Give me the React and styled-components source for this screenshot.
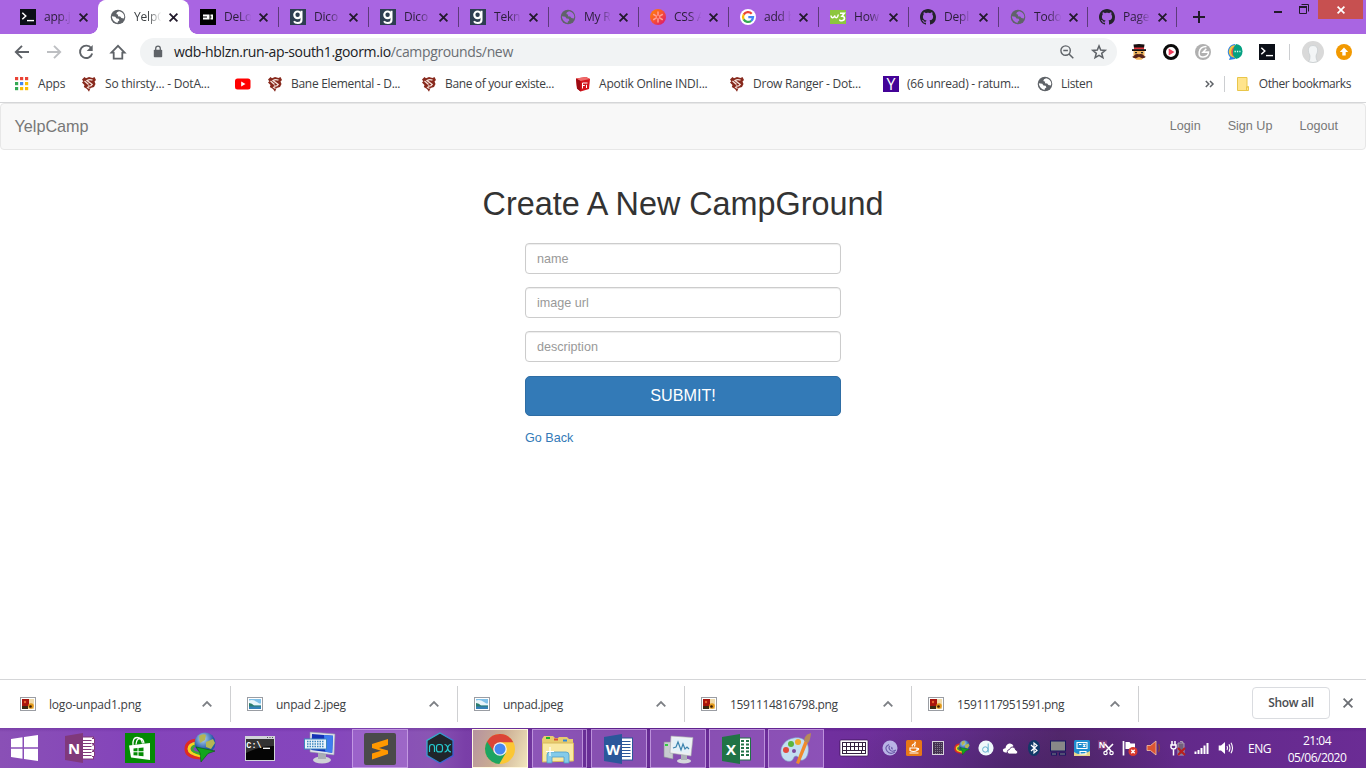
import React from 'react';
import styled, { createGlobalStyle, css } from 'styled-components';

const ui = `'Open Sans', 'Noto Sans', sans-serif`;
const web = `'Liberation Sans', Arial, sans-serif`;

const GlobalStyle = createGlobalStyle`
  *, *::before, *::after { box-sizing: border-box; }
  body { margin: 0; background: #fff; overflow: hidden; }
  svg { display: block; flex: none; overflow: visible; }
`;

const Screen = styled.div`
  width: 1366px;
  height: 768px;
  display: flex;
  flex-direction: column;
  background: #fff;
  font-family: ${ui};
`;

/* ---------- tab strip ---------- */
const TabStrip = styled.div`
  display: flex;
  height: 34px;
  padding-left: 8px;
  background: #a965e2;
  flex: none;
`;
const Tab = styled.div`
  position: relative;
  display: flex;
  align-items: center;
  width: ${(p) => p.$w}px;
  height: 34px;
  padding-left: 12px;
  color: #2b1d39;
  ${(p) => p.$line && css`
    &::after { content: ''; position: absolute; right: -1px; top: 7px; width: 1px; height: 20px; background: #5d3b7b; }
  `}
  ${(p) => p.$active && css`
    background: #fff;
    color: #3c4043;
    border-radius: 8px 8px 0 0;
    box-shadow: 1px 0 0 #fff;
    &::before, &::after { content: ''; position: absolute; bottom: 0; width: 8px; height: 8px; }
    &::before { left: -8px; background: radial-gradient(circle at 0 0, transparent 7.5px, #fff 8px); }
    &::after { right: -9px; background: radial-gradient(circle at 100% 0, transparent 7.5px, #fff 8px); }
  `}
`;
const TabTitle = styled.span`
  width: 28px;
  margin: 0 6.5px 0 8px;
  white-space: nowrap;
  font-size: 12px;
  line-height: 18px;
  letter-spacing: -0.2px;
  mask-image: linear-gradient(90deg, #000 50%, transparent 98%);
`;
const NewTab = styled.div`
  display: flex;
  align-items: center;
  padding-left: 17px;
`;
const WindowControls = styled.div`
  display: flex;
  margin-left: auto;
  margin-right: 3px;
`;
const WindowClose = styled.div`
  width: 45px;
  height: 19px;
  background: #c75050;
  display: flex;
  align-items: center;
  justify-content: center;
`;

/* ---------- toolbar ---------- */
const Toolbar = styled.div`
  display: flex;
  align-items: center;
  height: 36px;
  padding-left: 14px;
  flex: none;
`;
const NavButtons = styled.div`
  display: flex;
  gap: 16px;
  margin-right: 14px;
`;
const Omnibox = styled.div`
  display: flex;
  align-items: center;
  width: 977px;
  height: 28px;
  padding: 0 10px;
  border-radius: 14px;
  background: #f1f3f4;
`;
const Url = styled.div`
  margin-left: 8px;
  flex: 1;
  color: #202124;
  font-size: 14px;
  line-height: 20px;
  letter-spacing: -0.35px;
  white-space: nowrap;
  span { color: #6a6e73; }
`;
const OmniActions = styled.div`
  display: flex;
  gap: 16px;
`;
const Extensions = styled.div`
  display: flex;
  align-items: center;
  gap: 16px;
  margin-left: 14px;
`;
const Divider = styled.i`
  width: 1px;
  height: 16px;
  background: #ccced1;
`;
const Profile = styled.div`
  display: flex;
  align-items: center;
  gap: 12px;
  margin-left: 14px;
`;

/* ---------- bookmarks ---------- */
const Bookmarks = styled.div`
  display: flex;
  align-items: center;
  height: 33px;
  padding: 0 15px 5px 14px;
  border-bottom: 1px solid #d5d6d8;
  flex: none;
`;
const Bookmark = styled.div`
  display: flex;
  align-items: center;
  gap: 8px;
  width: ${(p) => p.$w}px;
`;
const BookmarkText = styled.span`
  font-size: 12px;
  line-height: 18px;
  color: #3c4043;
  white-space: nowrap;
  letter-spacing: ${(p) => p.$ls ?? -0.2}px;
`;
const BookmarkEnd = styled.div`
  display: flex;
  align-items: center;
  gap: 10px;
  margin-left: auto;
`;
const FolderSlot = styled.div`
  display: flex;
  gap: 10px;
  align-items: center;
  margin-left: 2px;
`;

/* ---------- page ---------- */
const Page = styled.main`
  flex: 1;
  display: flex;
  flex-direction: column;
  font-family: ${web};
`;
const Navbar = styled.nav`
  display: flex;
  align-items: center;
  height: 47px;
  padding: 0 27px 0 13.5px;
  border: 1px solid #e7e7e7;
  border-radius: 4px;
  background: #f8f8f8;
  color: #777;
`;
const Brand = styled.a`
  font-size: 16.2px;
`;
const NavLinks = styled.div`
  display: flex;
  gap: 27px;
  margin-left: auto;
  padding-bottom: 2px;
  font-size: 12.6px;
`;
const Heading = styled.h1`
  margin: 35px 0 0;
  text-align: center;
  font-size: 32.4px;
  line-height: 38px;
  letter-spacing: -0.03px;
  font-weight: 400;
  color: #333;
`;
const Form = styled.form`
  display: flex;
  flex-direction: column;
  width: 316px;
  margin: 20px auto 0 525px;
`;
const Field = styled.input`
  height: 31px;
  margin-bottom: 13px;
  padding: 0 11px;
  border: 1px solid #ccc;
  border-radius: 4px;
  background: #fff;
  box-shadow: inset 0 1px 1px rgba(0, 0, 0, 0.075);
  font: 12.6px ${web};
  outline: 0;
  &::placeholder { color: #999; opacity: 1; }
`;
const Submit = styled.button`
  height: 40px;
  margin-top: 1px;
  padding: 0 0 2px;
  border: 1px solid #2e6da4;
  border-radius: 5px;
  background: #337ab7;
  color: #fff;
  font: 16.2px ${web};
`;
const GoBack = styled.a`
  margin-top: 13px;
  font-size: 12.6px;
  line-height: 18px;
  color: #337ab7;
`;

/* ---------- download shelf ---------- */
const Shelf = styled.div`
  display: flex;
  height: 49px;
  padding: 6px 13px 6px 4px;
  border-top: 1px solid #d5d6d8;
  flex: none;
`;
const Download = styled.div`
  display: flex;
  align-items: center;
  width: 227px;
  height: 36px;
  padding: 0 18px 0 16px;
  border-right: 1px solid #cfd0d2;
  color: #3c4043;
  font-size: 12px;
  letter-spacing: ${(p) => p.$ls}px;
  span { margin-left: 13px; flex: 1; white-space: nowrap; }
`;
const ShelfEnd = styled.div`
  display: flex;
  align-items: center;
  gap: 13px;
  margin-left: auto;
  height: 34px;
`;
const ShowAll = styled.div`
  width: 78px;
  height: 32px;
  border: 1px solid #dadce0;
  border-radius: 4px;
  text-align: center;
  font-size: 12px;
  line-height: 30px;
  font-weight: 600;
  letter-spacing: -0.3px;
  color: #4a4d51;
`;

/* ---------- taskbar ---------- */
const Taskbar = styled.div`
  display: flex;
  align-items: center;
  height: 40px;
  flex: none;
  background:
    radial-gradient(ellipse 170px 60px at 1010px 40px, rgba(60, 30, 90, 0.5), transparent),
    linear-gradient(180deg, rgba(60, 0, 110, 0.2), transparent 4px),
    linear-gradient(90deg, #8a50b6 0, #8444ba 130px, #8546bd 330px, #8a55b4 430px, #7a3fa8 465px, #642991 620px, #702f9e 830px, #683092 960px, #56296f 1060px, #62298a 1180px, #6b2c95 1366px);
`;
const Pinned = styled.div`
  display: flex;
  align-items: center;
  justify-content: center;
  width: 60px;
  height: 40px;
  &:first-child { width: 50px; }
`;
const Running = styled.div`
  position: relative;
  display: flex;
  align-items: center;
  justify-content: center;
  width: ${(p) => p.$w || 56}px;
  height: 39px;
  margin: 1px ${(p) => p.$mr ?? 3}px 0 ${(p) => p.$ml || 0}px;
  border: 1px solid rgba(215, 180, 240, 0.65);
  background: rgba(190, 140, 225, 0.38);
  ${(p) => p.$focus && css`
    border: 1px solid #fff8df;
    background: linear-gradient(110deg, #b592a0 0%, #c9ab92 45%, #f1e6bd 100%);
  `}
  ${(p) => p.$stack && css`
    &::after { content: ''; position: absolute; right: -5px; top: -1px; width: 4px; height: 39px; border: 1px solid rgba(215, 180, 240, 0.65); border-left: 0; }
  `}
`;
const Nox = styled.div`
  display: flex;
  justify-content: center;
  width: 64px;
`;
const Tray = styled.div`
  display: flex;
  align-items: center;
  margin-left: 12px;
  padding: 0;
`;
const TrayIcons = styled.div`
  display: flex;
  margin-left: 9px;
`;
const TrayItem = styled.div`
  display: flex;
  justify-content: center;
  align-items: center;
  width: 24px;
`;
const Lang = styled.div`
  margin-left: 10px;
  width: 24px;
  font-size: 12px;
  letter-spacing: -0.5px;
  color: #fff;
`;
const Clock = styled.div`
  margin-left: 14px;
  padding-top: 2px;
  width: 62px;
  text-align: center;
  color: #fff;
  font-size: 12px;
  line-height: 17px;
  letter-spacing: -0.5px;
  white-space: nowrap;
`;

/* ---------- icons ---------- */
const Svg = ({ s = 16, h, children, vb }) => (
  <svg width={s} height={h || s} viewBox={vb || `0 0 ${s} ${h || s}`}>{children}</svg>
);
const Letter = ({ x, y, size, fill = '#fff', weight = 700, font = "'Open Sans', sans-serif", children }) => (
  <text x={x} y={y} fontSize={size} fill={fill} fontWeight={weight} fontFamily={font} textAnchor="middle">{children}</text>
);

const Terminal = () => (
  <Svg>
    <rect width="16" height="16" fill="#0b0f17" />
    <path d="M2.3 3.7 5.8 7 2.3 10.3" fill="none" stroke="#fff" strokeWidth="1.5" />
    <path d="M7 11.6h7" stroke="#fff" strokeWidth="1.4" />
  </Svg>
);
const Globe = ({ c = '#5f6368', bg = '#fff' }) => (
  <Svg>
    <circle cx="8" cy="8" r="7.3" fill={c} />
    <path d="M9.2 2.200 7 3.300 6.300 5l1.900.7-.3 1.600 2.300.3 1.200 1.500 2.400.3.500-1.600C14.200 4.900 12.300 2.700 9.200 2.200z" fill={bg} />
    <path d="M1.900 7.300c.1 3.300 2.300 5.900 5.600 6.600l.4-1.500 1.500-.9-.7-1.700-2.200-.4-1.200-1.700z" fill={bg} />
  </Svg>
);
const Device = () => (
  <Svg>
    <rect width="16" height="16" fill="#000" />
    <path d="M3 5.500h6.500v5H3zM10.500 5.500H13v5h-2.500z" fill="#fff" />
    <path d="M3 8h4M10 8h1.500" stroke="#000" strokeWidth="1" />
  </Svg>
);
const Goodreads = () => (
  <Svg>
    <rect width="16" height="16" fill="#2d3e50" />
    <circle cx="7.600" cy="5.800" r="3.300" fill="none" stroke="#fff" strokeWidth="2.200" />
    <path d="M11.500 1.800v9.300q0 3-3.700 3Q5 14.100 4 12.300" fill="none" stroke="#fff" strokeWidth="2" />
  </Svg>
);
const CssIcon = () => (
  <Svg>
    <defs><linearGradient id="csst" x1="0" y1="0" x2="1" y2="1"><stop offset="0" stopColor="#ff8a00" /><stop offset=".45" stopColor="#f9552e" /><stop offset="1" stopColor="#d6107a" /></linearGradient></defs>
    <circle cx="8" cy="8" r="8" fill="url(#csst)" />
    <path d="M8 3v3.200M8 9.800V13M3.700 5.500l2.700 1.600M9.600 8.900l2.700 1.600M3.700 10.500l2.700-1.600M9.600 7.100l2.700-1.600" stroke="#ff9d92" strokeWidth="1.500" strokeLinecap="round" />
  </Svg>
);
const Google = () => (
  <Svg>
    <circle cx="8" cy="8" r="8" fill="#fff" />
    <g fill="none" strokeWidth="2.300">
      <path d="M11.700 4.700A5 5 0 0 0 3.700 5.600" stroke="#ea4335" />
      <path d="M3.700 5.500a5 5 0 0 0 0 5" stroke="#fbbc05" />
      <path d="M3.700 10.400a5 5 0 0 0 7.500 1.400" stroke="#34a853" />
      <path d="M11.100 11.900A5 5 0 0 0 13 8.200H8.300" stroke="#4285f4" />
    </g>
  </Svg>
);
const W3 = () => (
  <Svg>
    <rect width="16" height="14" y="1" fill="#8cc63e" />
    <path d="M1 6.500q.3 2.500 1.800 2.200T4.800 6.500q0 2.300 1.500 2.200T8.300 5.500" fill="none" stroke="#fff" strokeWidth="1.500" />
    <path d="M10 4.300h4.300L12 7.200q2.500 0 2.500 2.100T12 11.700 9.800 10.500" fill="none" stroke="#fff" strokeWidth="1.600" />
  </Svg>
);
const Github = () => (
  <Svg>
    <path fill="#24232b" d="M8 0C3.580 0 0 3.580 0 8c0 3.540 2.290 6.530 5.470 7.590.4.070.55-.17.55-.38 0-.19-.01-.82-.01-1.490-2.010.37-2.530-.49-2.690-.94-.09-.23-.48-.94-.82-1.130-.28-.15-.68-.52-.01-.53.630-.01 1.080.58 1.230.82.720 1.210 1.870.87 2.330.66.070-.52.280-.87.510-1.070-1.780-.2-3.640-.89-3.640-3.950 0-.87.310-1.590.82-2.150-.08-.2-.36-1.020.08-2.120 0 0 .67-.21 2.200.82.640-.18 1.320-.27 2-.27s1.360.09 2 .27c1.530-1.040 2.200-.82 2.200-.82.440 1.100.160 1.920.08 2.120.510.56.820 1.270.820 2.150 0 3.070-1.870 3.750-3.650 3.950.290.250.540.730.540 1.480 0 1.070-.01 1.930-.01 2.200 0 .210.150.460.550.380A8.010 8.010 0 0 0 16 8c0-4.420-3.580-8-8-8z" />
  </Svg>
);
const Cross = ({ c = '#221a2b', s = 9, w = 1.8 }) => (
  <Svg s={s}><path d={`M.6 .6 ${s - 0.6} ${s - 0.6}M${s - 0.6} .6 .6 ${s - 0.6}`} stroke={c} strokeWidth={w} /></Svg>
);
const Arrow = ({ c, flip }) => (
  <Svg><g transform={flip ? 'matrix(-1 0 0 1 16 0)' : undefined}><path d="M15 8H2.500M8 1.800 1.800 8 8 14.200" fill="none" stroke={c} strokeWidth="1.900" /></g></Svg>
);
const Reload = () => (
  <Svg><path d="M13.300 4.200A6.200 6.200 0 1 0 14.200 9.500" fill="none" stroke="#5f6368" strokeWidth="1.900" /><path d="M14.700 1v6h-6z" fill="#5f6368" /></Svg>
);
const Home = () => (
  <Svg><path d="M1.400 8.700 8 1.800l6.600 6.900h-2.300v6H3.700v-6z" fill="none" stroke="#5f6368" strokeWidth="1.800" /></Svg>
);
const Lock = () => (
  <Svg><rect x="3.800" y="5.700" width="8.400" height="7.500" rx=".8" fill="#5f6368" /><path d="M5.700 6.500V4.500a2.300 2.300 0 0 1 4.600 0v2" fill="none" stroke="#5f6368" strokeWidth="1.300" /></Svg>
);
const ZoomOut = () => (
  <Svg><circle cx="6.600" cy="6.600" r="4.700" fill="none" stroke="#5f6368" strokeWidth="1.400" /><path d="M10 10 14.300 14.300M4.300 6.600h4.600" stroke="#5f6368" strokeWidth="1.500" /></Svg>
);
const Star = () => (
  <Svg><path d="m8 1.900 1.700 4.200 4.500.3-3.500 2.900 1.200 4.400L8 11.300l-3.900 2.400 1.200-4.400L1.800 6.400l4.500-.3z" fill="none" stroke="#5f6368" strokeWidth="1.500" /></Svg>
);
const HatMan = () => (
  <Svg>
    <path d="M2.500 0.500q5.500-1 11 0L13 4H3z" fill="#171011" /><path d="M3 3.500h10v2H3z" fill="#e2333b" /><path d="M1 5.200h14v1.800H1z" fill="#171011" />
    <path d="M2.500 7h11v6l-3 2.800h-5l-3-2.800z" fill="#f1b65e" /><path d="M4 8h2v1.200H4zM10 8h2v1.200h-2z" fill="#222" />
    <path d="M.8 12.600q1.500.4 2.700-1.300t4.500-1q3.300-.7 4.500 1t2.700 1.300q-2 2.300-4.700 1.400L8 12.800 5.500 14q-2.700.9-4.700-1.400z" fill="#58231a" />
  </Svg>
);
const PlayRing = () => (
  <Svg><circle cx="8" cy="8" r="6.500" fill="#fff" stroke="#0b0b0b" strokeWidth="3" /><path d="M5.700 4.600 11.500 8l-5.800 3.400z" fill="#ef3f5e" /></Svg>
);
const ClipDisc = () => (
  <Svg><circle cx="8" cy="8" r="8" fill="#b0b0b0" /><path d="M11.500 2.500Q5 2.500 4.200 8t4 5Q13.500 12.500 13.500 8L8 8.200l3.300-3.500" fill="none" stroke="#fff" strokeWidth="1.500" /></Svg>
);
const ChatDots = () => (
  <Svg>
    <path d="M8 0A7.800 7.800 0 0 0 3 13.200L2 16l6-1z" fill="#2d83e8" />
    <path d="M8 1.300a6.300 6.300 0 0 0-3.800 11.200L8 14z" fill="#f3c83b" /><path d="M8.500 2.300a6 6 0 0 0-2.800 9.700L8 13z" fill="#e5584f" />
    <path d="M9 0q6.500.7 6.500 7.300T9 15Q5.500 12 5.800 7.500T9 0z" fill="#05a081" />
    <path d="M7.500 7.500h6" stroke="#d9fff4" strokeWidth="1.300" strokeDasharray="1.300 1.100" />
  </Svg>
);
const Avatar = () => (
  <Svg s={22}>
    <circle cx="11" cy="11" r="11" fill="#d9d9d9" />
    <path d="M11 4.500c3.500 0 5 2.500 4.600 5.500-.3 2.500-1.600 3.500-1.600 5.200 0 1.700.6 3.700 1.500 5.300a10.500 10.500 0 0 1-9 0c1.500-1.600 1.500-3.600 1.500-5.300 0-1.700-1.300-2.700-1.600-5.200C6 7 7.500 4.500 11 4.500z" fill="#f3f5f6" stroke="#bfc6ca" strokeWidth=".6" />
  </Svg>
);
const Update = () => (
  <Svg><circle cx="8" cy="8" r="8" fill="#f29900" /><path d="M8 3.500 12.200 8H9.700v3.500H6.300V8H3.800z" fill="#fff" /></Svg>
);
const AppsGrid = () => (
  <Svg>
    {['#ea4335', '#ea4335', '#ea4335', '#34a853', '#4285f4', '#fbbc05', '#34a853', '#fbbc05', '#fbbc05'].map((c, i) => (
      <rect key={i} x={1 + (i % 3) * 5} y={1 + Math.floor(i / 3) * 5} width="3.200" height="3.200" fill={c} />
    ))}
  </Svg>
);
const Dota = () => (
  <Svg>
    <path d="M1 3.500 3.500 1 5 2.200 8 1l3.500 1L13.500 1 15 4l-1.500 1.500 1 2.500-1.500 3-3.500 1L8 15.800 6 13 2.800 11l.7-2L1 6.500l1.300-1.300z" fill="#87291d" />
    <path d="M11.500 4.200Q8.500 2.800 6 4.500l5.200 4q-1 2-4.200 1.500M3.500 5l4 3.500M6 11l2.500 1.500" fill="none" stroke="#f6e3dc" strokeWidth="1.300" />
  </Svg>
);
const YouTube = () => (<Svg><rect y="2.500" width="15.500" height="11" rx="2.500" fill="#f00" /><path d="M6.200 5.600 10.500 8l-4.300 2.400z" fill="#fff" /></Svg>);
const RedBox = () => (
  <Svg><path d="M1 2.500 11 1l4 2-1 10-8.500 2.500L2 12.500z" fill="#d3141c" /><path d="M1 2.500 11 1l4 2L5.500 5z" fill="#ef6a6a" /><path d="m1 2.500 4.500 2.500v10.500L2 12.500z" fill="#9c0a12" /><path d="M7.500 12.500V7h5M7.500 9.500h2.300M11.500 8.800v3.200" fill="none" stroke="#fff" strokeWidth="1" /></Svg>
);
const Yahoo = () => (<Svg><rect width="16" height="16" fill="#430297" /><Letter x={8} y={13.800} size={16} weight={400}>Y</Letter></Svg>);
const Folder = () => (
  <Svg s={12} h={14}><path d="M.5.5h9.500v9.500h1.500v3.500H.5z" fill="#ffe48c" stroke="#e9c64a" /><path d="M9.500 13.500V9.800H12" fill="none" stroke="#e9c64a" /></Svg>
);
const Chevrons = () => (<Svg s={9} h={8}><path d="m.8 1 3 3-3 3M5 1l3 3-3 3" fill="none" stroke="#5f6368" strokeWidth="1.500" /></Svg>);
const Caret = () => (<Svg s={10} h={6}><path d="m.7 5.300 4.300-4.300 4.300 4.300" fill="none" stroke="#7c7f84" strokeWidth="1.800" /></Svg>);
const PngFile = () => (
  <Svg s={16} h={14}><rect x=".5" y=".5" width="15" height="13" fill="#fff" stroke="#9a9da3" /><rect x="2" y="2" width="12" height="10" fill="#f0d9a8" /><rect x="2" y="2" width="7" height="7" fill="#a8140c" /><path d="M2 9h6v3H2z" fill="#3b2a12" /><circle cx="11" cy="9" r="2.800" fill="#e39a1b" /><circle cx="10.500" cy="9.500" r="1.300" fill="#3b1d08" /><circle cx="5" cy="5" r="1.200" fill="#e7642f" /></Svg>
);
const JpegFile = () => (
  <Svg s={16} h={14}><rect x=".5" y=".5" width="15" height="13" fill="#fff" stroke="#9a9da3" /><rect x="2" y="2" width="12" height="10" fill="#7fc0e8" /><path d="M2 3.500q4-1.500 8 1.500t4 .5v3H2z" fill="#e9f5fb" /><path d="M2 6q3 0 5 2.500h7V10H2z" fill="#2c7d6d" /><path d="M2 9.500h12V12H2z" fill="#3480b8" /></Svg>
);

const WinLogo = () => (<Svg s={28} h={26}><path d="M0 4 11.500 2.300V12.300H0zM13 2.100 27 0v12.300H13zM0 13.700h11.500v10L0 22zM13 13.700h14V26l-14-2.100z" fill="#fff" /></Svg>);
const OfficeDoc = ({ c, l, sheet, note }) => (
  <Svg s={30}>
    <rect x="16" y="4" width="12.500" height="22" fill="#fff" stroke={c} strokeWidth="1" />
    {note && <path d="M27 5.500h2.500v5H27M27 12h2.500v5H27M27 18.500h2.500v5H27" fill="#fff" stroke={c} />}
    {sheet ? <path d="M19 7h3M24 7h3M19 10.500h3M24 10.500h3M19 14h3M24 14h3M19 17.500h3M24 17.500h3M19 21h3M24 21h3" stroke={c} strokeWidth="2.200" />
      : <path d="M18 7.500h8.500M18 10.500h8.500M18 13.500h8.500M18 16.500h8.500M18 19.500h8.500M18 22.500h8.500" stroke={c} strokeWidth="1.200" />}
    <path d="M0 3 18 0v30L0 27z" fill={c} />
    <Letter x={9} y={20.500} size={15}>{l}</Letter>
  </Svg>
);
const StoreIcon = () => (
  <Svg s={30}>
    <rect width="30" height="30" fill="#048a04" />
    <path d="M4 12.500 25 10v17L6 24.500z" fill="#fff" /><path d="M8 12q-.5-7.500 4-7.500t5.500 6M11 11.500q.5-6 4-6T19 10.500" fill="none" stroke="#fff" strokeWidth="1.300" />
    <path d="m8.500 15.500 4-.4v3.100h-4zM13.500 15l5-.5v3.700h-5zM8.500 19.200h4v3.400l-4-.4zM13.500 19.200h5v4.100l-5-.6z" fill="#048a04" />
  </Svg>
);
const Idm = ({ s = 32 }) => (
  <Svg s={s} vb="0 0 32 32">
    <defs><radialGradient id="earth" cx=".4" cy=".3"><stop offset="0" stopColor="#b7dcf5" /><stop offset="1" stopColor="#2559a5" /></radialGradient></defs>
    <path d="M13 8Q2 9 2 17t14 9" fill="none" stroke="#e22b20" strokeWidth="3" /><path d="M13 11Q5 12 5 17t12 7" fill="none" stroke="#f7d51d" strokeWidth="3" /><path d="M13 13.500Q8 14 8 17t9 5" fill="none" stroke="#39a935" strokeWidth="2.500" />
    <circle cx="21" cy="11" r="10.500" fill="url(#earth)" /><path d="M15 4q4-3 7-1l-1 5-5 3zM22 10l7-3 2 4-4 6-5-2z" fill="#b5b653" />
    <path d="m12 15 19 4-7 2.500-7 8.500-1-9z" fill="#12a51c" stroke="#05570b" strokeWidth=".6" />
  </Svg>
);
const Cmd = () => (
  <Svg s={30} h={25}><rect width="30" height="25" fill="#d0d3d8" /><rect x="1" y="3" width="28" height="21" fill="#050505" /><path d="M1 3h28v7Q14 10 1 17z" fill="#333" /><Letter x={9} y={12} size={8.500} weight={700} font="'Liberation Mono', monospace">C:\</Letter><path d="M18 12.300h7" stroke="#fff" strokeWidth="1.300" /><path d="M22 1.500h1M24.500 1.500h1M27 1.500h1" stroke="#555" /></Svg>
);
const MonitorKeyboard = () => (
  <Svg s={32}>
    <ellipse cx="18" cy="28" rx="9" ry="3.500" fill="#cfd2d6" /><path d="M14 20h8v7h-8z" fill="#a9adb4" />
    <path d="m6 0 25 2-1 21-24-3z" fill="#dfe3ea" stroke="#8c93a5" strokeWidth=".6" /><path d="m8 2 21 1.700-.8 17L7.300 18z" fill="#1433b5" /><path d="m20 3 9 .7-.8 17-7-1z" fill="#3e7df0" />
    <rect x=".5" y="7" width="22" height="10" fill="#eaf4fb" stroke="#3c87bf" /><path d="M3 9.500h17M3 12h17M3 14.500h17" stroke="#3c87bf" strokeWidth="1.500" strokeDasharray="1.500 1" />
  </Svg>
);
const Sublime = () => (
  <Svg s={32}><rect width="32" height="32" rx="2" fill="#4a4a4a" /><path d="M8 11 24 6v6l-9 3 9 2.500v3.500L8 26.500v-6l9-2.800-9-2.700z" fill="#ff9800" /></Svg>
);
const NoxIcon = () => (
  <Svg s={28} h={32}>
    <defs><linearGradient id="nx" x1="0" y1="0" x2="1" y2="1"><stop offset="0" stopColor="#2fc4c8" /><stop offset="1" stopColor="#3a4dd4" /></linearGradient></defs>
    <path d="M14 1 27 8.500v15L14 31 1 23.500v-15z" fill="#20252b" stroke="url(#nx)" strokeWidth="1.300" />
    <path d="M3.500 20v-5q0-2.500 2.500-2.500t2.500 2.500v5M18.500 12.500q2.500 0 3.200 3.700t3.300 3.700M25 12.500q-2.600 0-3.300 3.700t-3.200 3.800" fill="none" stroke="#25cbd0" strokeWidth="1.200" /><rect x="10.500" y="12.500" width="6" height="7.400" rx="2.500" fill="none" stroke="#25cbd0" strokeWidth="1.200" />
  </Svg>
);
const Chrome = () => (
  <Svg s={30}>
    <circle cx="15" cy="15" r="15" fill="#fbc734" />
    <path d="M2 7.500A15 15 0 0 0 14.300 30L21 18.500 15 15z" fill="#1da462" />
    <path d="M2 7.500A15 15 0 0 1 28.300 8.300H15L9 18z" fill="#db4437" /><circle cx="15" cy="15" r="6.800" fill="#f2f2f2" /><circle cx="15" cy="15" r="5.500" fill="#4688f1" />
  </Svg>
);
const Explorer = () => (
  <Svg s={32} h={28}>
    <path d="M0 4 2 1h9l2 2h3l1-1h8l2 2h4v22H1z" fill="#e8cc6d" /><rect x="4" y="2" width="4" height="2" fill="#1cb32b" /><path d="M12 4.500h4" stroke="#db4c36" strokeWidth="2" /><path d="M21 5.500h4" stroke="#3188d8" strokeWidth="2" />
    <path d="M.5 8h31v18l-31 1z" fill="#f9e8a2" stroke="#d8b95c" /><path d="M5 28V20q0-3 3-3h16q3 0 3 3v8h-5v-6H10v6z" fill="#83cbe9" stroke="#4c9dc9" strokeWidth=".8" />
    <path d="M8 12v9M4 16.500h8" stroke="#fff" strokeWidth="1.200" />
  </Svg>
);
const PerfMon = () => (
  <Svg s={30} h={28}>
    <path d="M1 7h9v17l-9-2z" fill="#c8ccd0" stroke="#8a8f95" strokeWidth=".6" /><rect x="2" y="9" width="3" height="2" fill="#33c944" />
    <ellipse cx="21" cy="26" rx="7" ry="2.500" fill="#d5d8dc" /><path d="M18 18h6v7h-6z" fill="#aeb3ba" />
    <path d="m8 1 22 1.500-2 18.500L7 18z" fill="#eef0f2" stroke="#a2a7ad" strokeWidth=".6" /><path d="m10 3 17.500 1.300L26 18.500 9.300 16z" fill="#e4f1f8" />
    <path d="m10 13 3-1 2-5 3 8 2-6 2 5 2-2 2 2" fill="none" stroke="#3b83ae" strokeWidth="1.200" />
  </Svg>
);
const Paint = () => (
  <Svg s={32}>
    <path d="M14 5C6 6 0 13 1 20c1 7 6 9 10 8 3-1 2-5 5-5 3 0 3 5 7 4 5-2 6-9 5-14C26 6 20 4 14 5z" fill="#c3dff1" stroke="#7fa8c8" strokeWidth=".6" />
    <circle cx="6" cy="17" r="3" fill="#e2493c" /><circle cx="11" cy="11" r="3" fill="#5bb53c" /><circle cx="18" cy="9" r="3" fill="#f0a92b" /><circle cx="14" cy="18" r="2" fill="#7c4a9e" />
    <path d="m25 7 3 2-9 22-3-1z" fill="#f08a2c" /><path d="M24 8q0-6 7-8-.5 7-3 10z" fill="#b78a5a" />
  </Svg>
);
const Keyboard = () => (
  <Svg s={30} h={18}><rect x="1" y="1" width="28" height="16" rx="1" fill="#fff" stroke="#34104c" strokeWidth=".7" /><rect x="3.500" y="3.500" width="23" height="11" fill="#fff" stroke="#33213e" /><path d="M3 7.500h24M3 11.500h24M7.500 3v8M11.500 3v8M15.500 3v8M19.500 3v8M23.500 3v8M7.500 11v4M22.500 11v4" stroke="#33213e" strokeWidth="1" /></Svg>
);

const trayIcons = [
  <Svg><circle cx="8" cy="8" r="7.500" fill="#b9b3e6" /><path d="M13 12q-5 3-8-1T7 4.500M14 10q-4 2.500-6 0t0-4M11 9q-2 0-1-2" fill="none" stroke="#6a5aa8" strokeWidth="1.200" /></Svg>,
  <Svg><rect width="16" height="16" rx="1.500" fill="#e87817" /><path d="M4 8h7v2.500q-3.500 2-7 0zM11 8.500h1.500q.5 1.500-1.500 1.500M3.500 13h9M6.500 6.500Q5.500 5 8 4T8.500 1.800M9 6.500Q8 5.500 9.500 4.500" fill="none" stroke="#fff" strokeWidth="1.200" /></Svg>,
  <Svg s={12} h={14}><rect x=".5" y=".5" width="11" height="13" fill="#443350" stroke="#d9d4de" /><path d="M3.500 2v11M5.500 2v11M7.500 2v11M9.500 2v11" stroke="#83768d" strokeDasharray="1 1" /></Svg>,
  <Idm s={16} />,
  <Svg><circle cx="8" cy="8" r="7.600" fill="#eff7fb" /><circle cx="7.300" cy="9.500" r="2.700" fill="none" stroke="#64afd0" /><path d="M10.200 3.500v9" stroke="#64afd0" /></Svg>,
  <Svg><path d="M5 12.500H3Q.5 12 .8 9.800 1.500 8 3.500 8.200 4 4 7.500 3.500q3-.3 4 2.500" fill="#fff" /><path d="M7 14q-2-.5-1.700-2.500T7.500 9.500Q8.500 6.500 11 7t2.700 3q2.300.5 1.800 2.500T13.500 14z" fill="#fff" stroke="#4b2566" strokeWidth=".8" /></Svg>,
  <Svg s={12} h={16}><ellipse cx="6" cy="8" rx="6" ry="8" fill="#113968" /><path d="m3 5 6 5.500-3 2.500V3l3 2.500L3 11" fill="none" stroke="#fff" strokeWidth="1.200" /></Svg>,
  <Svg><rect x=".5" y="1" width="15" height="10" fill="#888" stroke="#171760" /><path d="M1 14h6M9 14h7" stroke="#171760" strokeWidth="2.800" /><path d="M2 14h4M10 14h5" stroke="#888" /></Svg>,
  <Svg><rect width="16" height="16" rx="1.500" fill="#1e8ed0" /><path d="M0 12q7 5 16-1v5H0z" fill="#e9d68b" /><path d="M3 2.500h10v6H3zM5 4.500h2.500M9 4l2.500 2.500M11.500 4 9 6.500M6 11.500h6v2.500H6z" fill="none" stroke="#fff" strokeWidth="1.100" /></Svg>,
  <Svg><rect width="9" height="9" y=".5" fill="#80397b" /><Letter x={4} y={8} size={8}>N</Letter><path d="m7 4 6 7M15 4 8 11" stroke="#fff" strokeWidth="1.600" /><circle cx="7.500" cy="13" r="1.700" fill="none" stroke="#fff" strokeWidth="1.200" /><circle cx="13.500" cy="13" r="1.700" fill="none" stroke="#fff" strokeWidth="1.200" /></Svg>,
  <Svg><path d="M1.500 1v14.500" stroke="#fff" strokeWidth="1.700" /><path d="M3.500 2h4l1 1.500H13v7H8l-1-1.500H3.500z" fill="#fff" /><circle cx="11" cy="11.500" r="4.500" fill="#d9372c" /><path d="m9.300 9.800 3.400 3.400m0-3.400-3.400 3.400" stroke="#fff" strokeWidth="1.400" /></Svg>,
  <Svg><path d="M1 5.500h3.500L10 1v14l-5.500-4.500H1z" fill="#db5431" stroke="#f5c5a7" strokeWidth=".8" /><path d="M12.500 4q2 4 0 8" fill="none" stroke="#8e4635" strokeWidth="1.200" /></Svg>,
  <Svg><path d="M2 1v3.500M5 1v3.500M1 5h5v2.500q-.5 1.500-2.500 1.500T1 7.500zM3.500 9v6.500" fill="none" stroke="#fff" strokeWidth="1.500" /><path d="M8 3h6v12H8zM10 1.500h2.500V3" fill="#73607d" stroke="#aa9cb2" /><path d="m8 8 7 7m0-7-7 7" stroke="#b91f1d" strokeWidth="2" /></Svg>,
  <Svg><path d="M1.500 11.500v2.500M4.500 10v4M7.500 8v6M10.500 5.500V14M13.500 3v11" stroke="#fff" strokeWidth="2" /></Svg>,
  <Svg><path d="M.7 5.500H3L7 2v12l-4-3.500H.7z" fill="#fff" /><path d="M9 6q1 2 0 4M11 4.300q2 3.700 0 7.400M13 2.800q3 5.200 0 10.400" fill="none" stroke="#fff" strokeWidth="1.100" /></Svg>,
];

const tabs = [
  { t: 'app.j', icon: <Terminal /> },
  { t: 'YelpC', icon: <Globe />, active: true },
  { t: 'DeLo', icon: <Device />, line: true },
  { t: 'Dico', icon: <Goodreads />, line: true },
  { t: 'Dico', icon: <Goodreads />, line: true },
  { t: 'Tekn', icon: <Goodreads />, line: true },
  { t: 'My R', icon: <Globe bg="#a965e2" />, line: true },
  { t: 'CSS A', icon: <CssIcon />, line: true },
  { t: 'add b', icon: <Google />, line: true },
  { t: 'How', icon: <W3 />, line: true },
  { t: 'Depl', icon: <Github />, line: true },
  { t: 'Todo', icon: <Globe bg="#a965e2" />, line: true, w: 89 },
  { t: 'Page', icon: <Github />, line: true, w: 89 },
];

const bookmarks = [
  { t: 'Apps', icon: <AppsGrid />, w: 67 },
  { t: 'So thirsty... - DotA...', icon: <Dota />, w: 154 },
  { t: '', icon: <YouTube />, w: 32 },
  { t: 'Bane Elemental - D...', icon: <Dota />, w: 154, ls: -0.3 },
  { t: 'Bane of your existe...', icon: <Dota />, w: 154, ls: -0.36 },
  { t: 'Apotik Online INDI...', icon: <RedBox />, w: 154 },
  { t: 'Drow Ranger - Dot...', icon: <Dota />, w: 154, ls: -0.24 },
  { t: '(66 unread) - ratum...', icon: <Yahoo />, w: 154, ls: -0.26 },
  { t: 'Listen', icon: <Globe />, w: 70, ls: -0.3 },
];

const downloads = [
  { t: 'logo-unpad1.png', icon: <PngFile />, ls: -0.2 },
  { t: 'unpad 2.jpeg', icon: <JpegFile />, ls: -0.25 },
  { t: 'unpad.jpeg', icon: <JpegFile />, ls: -0.3 },
  { t: '1591114816798.png', icon: <PngFile />, ls: -0.35 },
  { t: '1591117951591.png', icon: <PngFile />, ls: -0.38 },
];

export default function App() {
  return (
    <>
      <GlobalStyle />
      <Screen>
        <TabStrip>
          {tabs.map((x, i) => (
            <Tab key={i} $w={x.w || 90} $active={x.active} $line={x.line}>
              {x.icon}
              <TabTitle>{x.t}</TabTitle>
              <Cross />
            </Tab>
          ))}
          <NewTab><Svg s={12}><path d="M6 0v12M0 6h12" stroke="#221a2b" strokeWidth="2" /></Svg></NewTab>
          <WindowControls>
            <Svg s={44} h={20}>
              <path d="M0 12h8" stroke="#221a2b" strokeWidth="2" />
              <path d="M25.500 6.500h7v7h-7zM27.500 4.500h7v7" fill="none" stroke="#221a2b" strokeWidth="1" />
              <path d="M25 7h8" stroke="#221a2b" strokeWidth="2" />
            </Svg>
            <WindowClose><Cross c="#fff" s={8} w={1.7} /></WindowClose>
          </WindowControls>
        </TabStrip>

        <Toolbar>
          <NavButtons><Arrow c="#5f6368" /><Arrow c="#bdbfc2" flip /><Reload /><Home /></NavButtons>
          <Omnibox>
            <Lock />
            <Url>wdb-hblzn.run-ap-south1.goorm.io<span>/campgrounds/new</span></Url>
            <OmniActions><ZoomOut /><Star /></OmniActions>
          </Omnibox>
          <Extensions><HatMan /><PlayRing /><ClipDisc /><ChatDots /><Terminal /></Extensions>
          <Profile><Divider /><Avatar /><Update /></Profile>
        </Toolbar>

        <Bookmarks>
          {bookmarks.map((b, i) => (
            <Bookmark key={i} $w={b.w}>{b.icon}{b.t && <BookmarkText $ls={b.ls}>{b.t}</BookmarkText>}</Bookmark>
          ))}
          <BookmarkEnd>
            <Chevrons />
            <Divider />
            <FolderSlot><Folder /><BookmarkText $ls={-0.42}>Other bookmarks</BookmarkText></FolderSlot>
          </BookmarkEnd>
        </Bookmarks>

        <Page>
          <Navbar>
            <Brand>YelpCamp</Brand>
            <NavLinks><a>Login</a><a>Sign Up</a><a>Logout</a></NavLinks>
          </Navbar>
          <Heading>Create A New CampGround</Heading>
          <Form>
            <Field placeholder="name" />
            <Field placeholder="image url" />
            <Field placeholder="description" />
            <Submit type="button">SUBMIT!</Submit>
            <GoBack>Go Back</GoBack>
          </Form>
        </Page>

        <Shelf>
          {downloads.map((d) => (
            <Download key={d.t} $ls={d.ls}>{d.icon}<span>{d.t}</span><Caret /></Download>
          ))}
          <ShelfEnd><ShowAll>Show all</ShowAll><Cross c="#6b6e73" s={10} w={1.8} /></ShelfEnd>
        </Shelf>

        <Taskbar>
          <Pinned><WinLogo /></Pinned>
          <Pinned><OfficeDoc c="#80397b" l="N" note /></Pinned>
          <Pinned><StoreIcon /></Pinned>
          <Pinned><Idm /></Pinned>
          <Pinned><Cmd /></Pinned>
          <Pinned><MonitorKeyboard /></Pinned>
          <Running $ml={2} $mr={0}><Sublime /></Running>
          <Nox><NoxIcon /></Nox>
          <Running $focus $mr={4}><Chrome /></Running>
          <Running $w={51} $mr={8} $stack><Explorer /></Running>
          <Running><OfficeDoc c="#2b579a" l="W" /></Running>
          <Running><PerfMon /></Running>
          <Running><OfficeDoc c="#217346" l="X" sheet /></Running>
          <Running><Paint /></Running>
          <Tray>
            <Keyboard />
            <TrayIcons>{trayIcons.map((ic, i) => <TrayItem key={i}>{ic}</TrayItem>)}</TrayIcons>
          </Tray>
          <Lang>ENG</Lang>
          <Clock>21:04<br />05/06/2020</Clock>
        </Taskbar>
      </Screen>
    </>
  );
}
